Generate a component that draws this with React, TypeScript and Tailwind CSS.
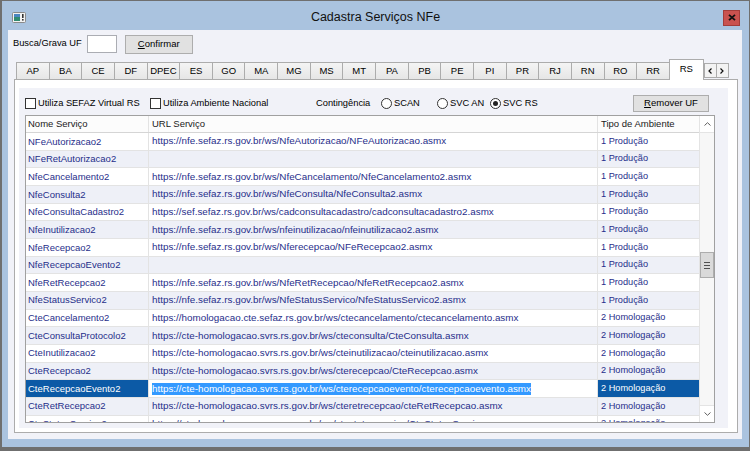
import React from "react";

const tabs = ["AP","BA","CE","DF","DPEC","ES","GO","MA","MG","MS","MT","PA","PB","PE","PI","PR","RJ","RN","RO","RR"];

const rows: [string, string, string][] = [
  ["NFeAutorizacao2", "https://nfe.sefaz.rs.gov.br/ws/NfeAutorizacao/NFeAutorizacao.asmx", "1 Produção"],
  ["NFeRetAutorizacao2", "", "1 Produção"],
  ["NfeCancelamento2", "https://nfe.sefaz.rs.gov.br/ws/NfeCancelamento/NfeCancelamento2.asmx", "1 Produção"],
  ["NfeConsulta2", "https://nfe.sefaz.rs.gov.br/ws/NfeConsulta/NfeConsulta2.asmx", "1 Produção"],
  ["NfeConsultaCadastro2", "https://sef.sefaz.rs.gov.br/ws/cadconsultacadastro/cadconsultacadastro2.asmx", "1 Produção"],
  ["NfeInutilizacao2", "https://nfe.sefaz.rs.gov.br/ws/nfeinutilizacao/nfeinutilizacao2.asmx", "1 Produção"],
  ["NfeRecepcao2", "https://nfe.sefaz.rs.gov.br/ws/Nferecepcao/NFeRecepcao2.asmx", "1 Produção"],
  ["NfeRecepcaoEvento2", "", "1 Produção"],
  ["NfeRetRecepcao2", "https://nfe.sefaz.rs.gov.br/ws/NfeRetRecepcao/NfeRetRecepcao2.asmx", "1 Produção"],
  ["NfeStatusServico2", "https://nfe.sefaz.rs.gov.br/ws/NfeStatusServico/NfeStatusServico2.asmx", "1 Produção"],
  ["CteCancelamento2", "https://homologacao.cte.sefaz.rs.gov.br/ws/ctecancelamento/ctecancelamento.asmx", "2 Homologação"],
  ["CteConsultaProtocolo2", "https://cte-homologacao.svrs.rs.gov.br/ws/cteconsulta/CteConsulta.asmx", "2 Homologação"],
  ["CteInutilizacao2", "https://cte-homologacao.svrs.rs.gov.br/ws/cteinutilizacao/cteinutilizacao.asmx", "2 Homologação"],
  ["CteRecepcao2", "https://cte-homologacao.svrs.rs.gov.br/ws/cterecepcao/CteRecepcao.asmx", "2 Homologação"],
  ["CteRecepcaoEvento2", "https://cte-homologacao.svrs.rs.gov.br/ws/cterecepcaoevento/cterecepcaoevento.asmx", "2 Homologação"],
  ["CteRetRecepcao2", "https://cte-homologacao.svrs.rs.gov.br/ws/cteretrecepcao/cteRetRecepcao.asmx", "2 Homologação"],
  ["CteStatusServico2", "https://cte-homologacao.svrs.rs.gov.br/ws/ctestatusservico/CteStatusServico.asmx", "2 Homologação"],
];

const SELECTED = 14;

function CheckBox() {
  return <span className="w-[11px] h-[11px] border border-[#333333] bg-white shrink-0" />;
}

function Radio({ on }: { on?: boolean }) {
  return (
    <span className="w-[11px] h-[11px] rounded-full border border-[#333333] bg-white shrink-0 flex items-center justify-center">
      {on ? <span className="w-[5px] h-[5px] rounded-full bg-[#222222]" /> : null}
    </span>
  );
}

export default function App() {
  return (
    <div className="w-[750px] h-[451px] bg-[#aac3df] border-l-2 border-t border-r border-b-4 border-[#6f6f6f] flex flex-col font-['Liberation_Sans',Arial,sans-serif] text-[9.5px] text-black overflow-hidden">
      {/* Title bar */}
      <div className="h-[29px] shrink-0 grid grid-cols-[1fr_auto_1fr] items-center pt-[4px]">
        <div className="pl-[10px] flex items-center">
          <svg width="14" height="11" viewBox="0 0 14 11">
            <rect x="0.5" y="0.5" width="13" height="10" rx="1" fill="#f2f2f2" stroke="#8a8a8a" />
            <rect x="2" y="2" width="6" height="7" fill="#2f8a70" />
            <rect x="2" y="2" width="6" height="3" fill="#4a86c0" />
            <rect x="10" y="2" width="1.6" height="4" fill="#333" />
            <rect x="10" y="7" width="1.6" height="1.6" fill="#333" />
          </svg>
        </div>
        <div className="text-[12.5px] text-[#111111] leading-none">Cadastra Serviços NFe</div>
        <div className="flex justify-end pr-[9px]">
          <div className="w-[17px] h-[16px] bg-[#c9524f] border border-[#a33c3a] flex items-center justify-center">
            <svg width="8" height="7" viewBox="0 0 8 7">
              <path d="M1 0.8 L7 6.2 M7 0.8 L1 6.2" stroke="#111" strokeWidth="1.8" />
            </svg>
          </div>
        </div>
      </div>

      {/* Client area */}
      <div className="ml-[6px] w-[734px] h-[409px] bg-[#f1f2f8] flex flex-col shrink-0">
        {/* Top row */}
        <div className="h-[20px] mt-[4px] flex items-center pl-[5px] shrink-0">
          <span className="text-[9.3px]">Busca/Grava UF</span>
          <div className="ml-[5px] w-[30px] h-[18px] bg-white border border-[#abadb3]" />
          <div className="ml-[8px] w-[68px] h-[19px] bg-[#e1e1e1] border border-[#adadad] flex items-center justify-center text-[9.5px]">
            <span><span className="underline">C</span>onfirmar</span>
          </div>
        </div>

        {/* Tab strip */}
        <div className="mt-[5px] h-[20px] ml-[8px] flex items-end relative z-10 shrink-0">
          {tabs.map((t) => (
            <div
              key={t}
              className="w-[32.65px] h-[17px] border-t border-l border-[#acacac] bg-linear-to-b from-[#f4f4f4] to-[#e6e6e6] flex items-center justify-center shrink-0 leading-none"
            >
              {t}
            </div>
          ))}
          <div className="w-[35px] h-[21px] -mb-px border-t border-l border-r border-[#acacac] bg-white flex items-start justify-center pt-[4px] shrink-0 leading-none">
            RS
          </div>
          <div className="self-start mt-[4px] flex">
            <div className="w-[13px] h-[15px] border border-[#acacac] bg-[#f3f3f3] flex items-center justify-center">
              <svg width="4" height="6" viewBox="0 0 4 6">
                <path d="M3.5 0.5 L1 3 L3.5 5.5" fill="none" stroke="#111" strokeWidth="1.2" />
              </svg>
            </div>
            <div className="w-[12px] h-[15px] border border-l-0 border-[#acacac] bg-[#f3f3f3] flex items-center justify-center">
              <svg width="4" height="6" viewBox="0 0 4 6">
                <path d="M0.5 0.5 L3 3 L0.5 5.5" fill="none" stroke="#111" strokeWidth="1.2" />
              </svg>
            </div>
          </div>
        </div>

        {/* Tab page */}
        <div className="ml-[6px] w-[724px] h-[354px] border border-[#acacac] bg-white pt-[8px] pl-[4px] shrink-0">
          <div className="w-[709px] h-[340px] bg-[#f1f2f8] flex flex-col">
            {/* Options row */}
            <div className="mt-[7px] h-[17px] flex items-center pr-[19px] shrink-0 text-[9.3px]">
              <div className="ml-[6px] w-[125px] flex items-center gap-[2px]">
                <CheckBox />
                <span>Utiliza SEFAZ Virtual RS</span>
              </div>
              <div className="w-[166px] flex items-center gap-[2px]">
                <CheckBox />
                <span>Utiliza Ambiente Nacional</span>
              </div>
              <div className="w-[65px]">Contingência</div>
              <div className="w-[56px] flex items-center gap-[2px]">
                <Radio />
                <span>SCAN</span>
              </div>
              <div className="w-[53px] flex items-center gap-[2px]">
                <Radio />
                <span>SVC AN</span>
              </div>
              <div className="flex items-center gap-[2px]">
                <Radio on />
                <span>SVC RS</span>
              </div>
              <div className="ml-auto w-[76px] h-[17px] bg-[#e1e1e1] border border-[#adadad] flex items-center justify-center text-[9.5px]">
                <span><span className="underline">R</span>emover UF</span>
              </div>
            </div>

            {/* Grid */}
            <div className="mt-[3px] ml-[6px] w-[690px] h-[308px] border border-[#a0a0a0] bg-white flex shrink-0">
              <div className="w-[673px] flex flex-col overflow-hidden">
                <div className="h-[17px] flex border-b border-[#d5d5d5] bg-[#fcfcfc] text-[#1a1a1a] shrink-0 leading-none">
                  <div className="w-[123px] border-r border-[#e3e3e3] pl-[2px] flex items-center shrink-0">Nome Serviço</div>
                  <div className="w-[449px] border-r border-[#e3e3e3] pl-[3px] flex items-center shrink-0">URL Serviço</div>
                  <div className="w-[101px] pl-[3px] flex items-center shrink-0">Tipo de Ambiente</div>
                </div>
                <div className="flex-1 overflow-hidden">
                  {rows.map((r, i) => {
                    const sel = i === SELECTED;
                    const bg = i % 2 === 1 ? "bg-[#eef0f7]" : "bg-white";
                    return (
                      <div key={r[0]} className={`h-[17.67px] flex border-b border-[#e3e3e3] leading-none whitespace-nowrap ${bg}`}>
                        <div className={`w-[123px] border-r border-[#e3e3e3] pl-[2px] flex items-center shrink-0 overflow-hidden ${sel ? "bg-[#0c5aa6] text-white" : "text-[#1f2e8a]"}`}>
                          {r[0]}
                        </div>
                        <div className={`w-[449px] border-r border-[#e3e3e3] pl-[3px] flex items-center shrink-0 overflow-hidden text-[9.85px] ${sel ? "bg-white" : "text-[#1f2e8a]"}`}>
                          {sel ? <span className="bg-[#3399ff] text-white leading-[12px]">{r[1]}</span> : r[1]}
                        </div>
                        <div className={`w-[101px] pl-[3px] flex items-center shrink-0 overflow-hidden text-[9.2px] ${sel ? "bg-[#0c5aa6] text-white" : "text-[#1f2e8a]"}`}>
                          {r[2]}
                        </div>
                      </div>
                    );
                  })}
                </div>
              </div>
              {/* Scrollbar */}
              <div className="w-[15px] border-l border-[#e4e4e4] bg-[#f7f7f7] flex flex-col shrink-0">
                <div className="h-[17px] bg-white border-b border-[#e4e4e4] flex items-center justify-center shrink-0">
                  <svg width="7" height="4" viewBox="0 0 7 4">
                    <path d="M0.5 3.5 L3.5 0.7 L6.5 3.5" fill="none" stroke="#606060" strokeWidth="1" />
                  </svg>
                </div>
                <div className="flex-1 flex flex-col">
                  <div className="mt-[119px] h-[26px] border border-[#adadad] bg-[#dadada] flex flex-col items-center justify-center gap-[2px]">
                    <span className="w-[6px] h-px bg-[#505050]" />
                    <span className="w-[6px] h-px bg-[#505050]" />
                    <span className="w-[6px] h-px bg-[#505050]" />
                  </div>
                </div>
                <div className="h-[17px] bg-white border-t border-[#e4e4e4] flex items-center justify-center shrink-0">
                  <svg width="7" height="4" viewBox="0 0 7 4">
                    <path d="M0.5 0.5 L3.5 3.3 L6.5 0.5" fill="none" stroke="#606060" strokeWidth="1" />
                  </svg>
                </div>
              </div>
            </div>
          </div>
        </div>
      </div>
    </div>
  );
}
